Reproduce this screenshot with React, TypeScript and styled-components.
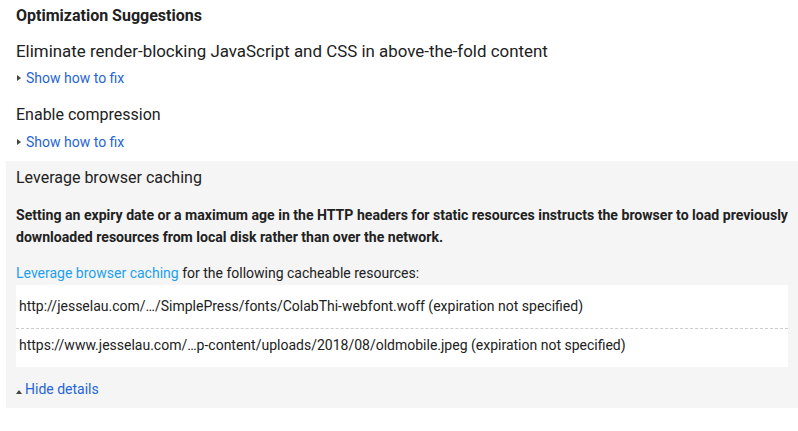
import React from 'react';
import { createGlobalStyle, styled } from 'styled-components';

const GlobalStyle = createGlobalStyle`
  body {
    margin: 0;
    background: #ffffff;
    font-family: Roboto, 'Noto Sans', Arial, sans-serif;
    color: #212121;
  }
`;

const resources = [
  'http://jesselau.com/…/SimplePress/fonts/ColabThi-webfont.woff (expiration not specified)',
  'https://www.jesselau.com/…p-content/uploads/2018/08/oldmobile.jpeg (expiration not specified)',
];

const App = () => {
  return (
    <Page>
      <GlobalStyle />
      <Title>Optimization Suggestions</Title>

      <Rule>
        <RuleName $size={16.9}>
          Eliminate render-blocking JavaScript and CSS in above-the-fold content
        </RuleName>
        <Toggle>
          <Arrow />
          Show how to fix
        </Toggle>
      </Rule>

      <Rule $tight>
        <RuleName>Enable compression</RuleName>
        <Toggle>
          <Arrow />
          Show how to fix
        </Toggle>
      </Rule>

      <Rule $open>
        <RuleName>Leverage browser caching</RuleName>
        <Summary>
          Setting an expiry date or a maximum age in the HTTP headers for static resources instructs the
          browser to load previously downloaded resources from local disk rather than over the network.
        </Summary>
        <Intro>
          <LearnLink>Leverage browser caching</LearnLink> for the following cacheable resources:
        </Intro>
        <ResourceList>
          {resources.map((url) => (
            <Resource key={url}>{url}</Resource>
          ))}
        </ResourceList>
        <Toggle $open>
          <Arrow $up />
          Hide details
        </Toggle>
      </Rule>
    </Page>
  );
};

export default App;

const Page = styled.div`
  padding: 6px 0 0 6px;
  width: 792px;
`;

const Title = styled.h3`
  margin: 0 0 15px;
  padding: 0 10px;
  font-size: 16px;
  line-height: 20px;
  font-weight: 700;
`;

const Rule = styled.div<{ $open?: boolean; $tight?: boolean }>`
  padding: ${(p) => (p.$open ? '7px 10px 9px' : '0 10px')};
  margin-bottom: ${(p) => (p.$open ? '0' : p.$tight ? '9px' : '17px')};
  background: ${(p) => (p.$open ? '#f5f5f5' : 'transparent')};
`;

const RuleName = styled.div<{ $size?: number }>`
  font-size: ${(p) => p.$size ?? 16}px;
  line-height: 20px;
  margin-bottom: 7px;
`;

const Toggle = styled.div<{ $open?: boolean }>`
  display: flex;
  align-items: ${(p) => (p.$open ? 'flex-end' : 'center')};
  gap: ${(p) => (p.$open ? '3px' : '5px')};
  margin-top: ${(p) => (p.$open ? '12px' : '0')};
  font-size: 14px;
  line-height: 20px;
  color: #2565d6;
  cursor: pointer;
`;

const Arrow = styled.span<{ $up?: boolean }>`
  display: inline-block;
  width: 0;
  height: 0;
  ${(p) =>
    p.$up
      ? `
    margin-bottom: 5px;
    border-left: 3.5px solid transparent;
    border-right: 3.5px solid transparent;
    border-bottom: 4px solid #444444;
  `
      : `
    margin-left: 1px;
    border-top: 3.5px solid transparent;
    border-bottom: 3.5px solid transparent;
    border-left: 4px solid #444444;
  `}
`;

const Summary = styled.p`
  margin: 16px 0 0;
  font-size: 14.08px;
  line-height: 22px;
  font-weight: 700;
`;

const Intro = styled.p`
  margin: 15px 0 2px;
  font-size: 14px;
  line-height: 20px;
`;

const LearnLink = styled.a`
  color: #22a0ee;
  text-decoration: none;
  cursor: pointer;
`;

const ResourceList = styled.div`
  background: #ffffff;
  padding-top: 5px;
`;

const Resource = styled.div`
  padding: 6px 3px 12px;
  font-size: 14px;
  line-height: 20px;
  & + & {
    border-top: 1px dashed #cccccc;
  }
`;
